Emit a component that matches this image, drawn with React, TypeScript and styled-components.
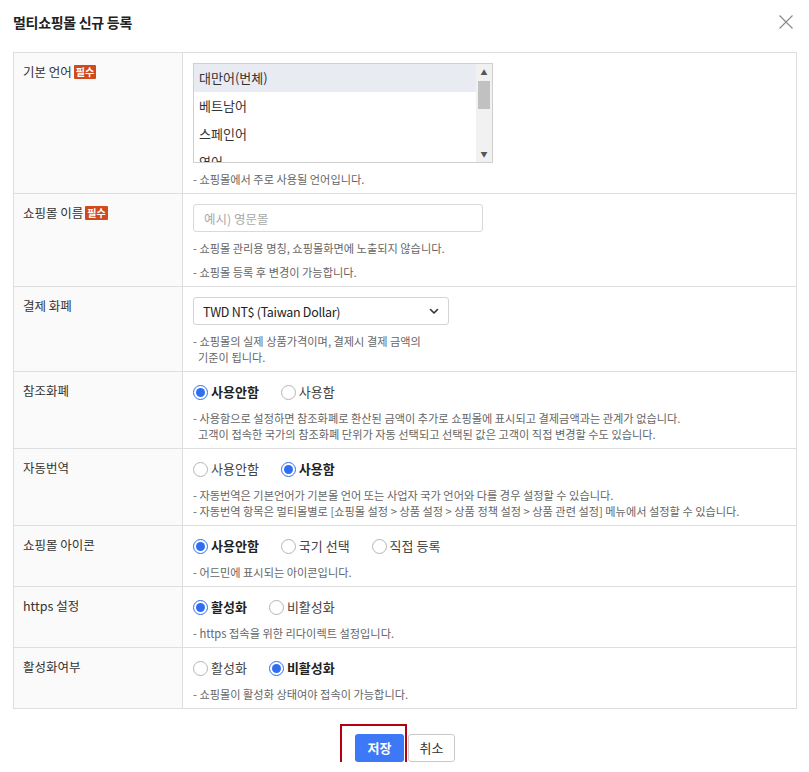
import React from 'react';
import styled, { createGlobalStyle } from 'styled-components';

const GlobalStyle = createGlobalStyle`
  * { box-sizing: border-box; }
  body {
    margin: 0;
    background: #fff;
    font-family: "Noto Sans CJK KR", "Noto Sans", sans-serif;
    color: #333;
  }
`;

interface RadioOption {
  label: string;
  checked: boolean;
}

interface FieldRow {
  label: string;
  required?: boolean;
  options?: RadioOption[];
  help: string[];
  helpSpaced?: boolean;
  kind: 'list' | 'input' | 'select' | 'radio';
}

const languages = ['대만어(번체)', '베트남어', '스페인어', '영어'];

const rows: FieldRow[] = [
  { label: '기본 언어', required: true, kind: 'list', help: ['- 쇼핑몰에서 주로 사용될 언어입니다.'] },
  {
    label: '쇼핑몰 이름',
    required: true,
    kind: 'input',
    helpSpaced: true,
    help: ['- 쇼핑몰 관리용 명칭, 쇼핑몰화면에 노출되지 않습니다.', '- 쇼핑몰 등록 후 변경이 가능합니다.'],
  },
  {
    label: '결제 화폐',
    kind: 'select',
    help: ['- 쇼핑몰의 실제 상품가격이며, 결제시 결제 금액의', '  기준이 됩니다.'],
  },
  {
    label: '참조화폐',
    kind: 'radio',
    options: [
      { label: '사용안함', checked: true },
      { label: '사용함', checked: false },
    ],
    help: [
      '- 사용함으로 설정하면 참조화폐로 환산된 금액이 추가로 쇼핑몰에 표시되고 결제금액과는 관계가 없습니다.',
      '  고객이 접속한 국가의 참조화폐 단위가 자동 선택되고 선택된 값은 고객이 직접 변경할 수도 있습니다.',
    ],
  },
  {
    label: '자동번역',
    kind: 'radio',
    options: [
      { label: '사용안함', checked: false },
      { label: '사용함', checked: true },
    ],
    help: [
      '- 자동번역은 기본언어가 기본몰 언어 또는 사업자 국가 언어와 다를 경우 설정할 수 있습니다.',
      '- 자동번역 항목은 멀티몰별로 [쇼핑몰 설정 > 상품 설정 > 상품 정책 설정 > 상품 관련 설정] 메뉴에서 설정할 수 있습니다.',
    ],
  },
  {
    label: '쇼핑몰 아이콘',
    kind: 'radio',
    options: [
      { label: '사용안함', checked: true },
      { label: '국기 선택', checked: false },
      { label: '직접 등록', checked: false },
    ],
    help: ['- 어드민에 표시되는 아이콘입니다.'],
  },
  {
    label: 'https 설정',
    kind: 'radio',
    options: [
      { label: '활성화', checked: true },
      { label: '비활성화', checked: false },
    ],
    help: ['- https 접속을 위한 리다이렉트 설정입니다.'],
  },
  {
    label: '활성화여부',
    kind: 'radio',
    options: [
      { label: '활성화', checked: false },
      { label: '비활성화', checked: true },
    ],
    help: ['- 쇼핑몰이 활성화 상태여야 접속이 가능합니다.'],
  },
];

const App: React.FC = () => {
  const renderControl = (row: FieldRow) => {
    switch (row.kind) {
      case 'list':
        return (
          <ListBox>
            <ListItems>
              {languages.map((lang, i) => (
                <ListItem key={lang} selected={i === 0}>{lang}</ListItem>
              ))}
            </ListItems>
            <ScrollTrack>
              <ScrollArrow>▲</ScrollArrow>
              <ScrollThumb />
              <ScrollArrow>▼</ScrollArrow>
            </ScrollTrack>
          </ListBox>
        );
      case 'input':
        return <TextInput placeholder="예시) 영문몰" />;
      case 'select':
        return (
          <SelectBox>
            <span>TWD NT$ (Taiwan Dollar)</span>
            <svg width="12" height="12" viewBox="0 0 12 12">
              <path d="M2.5 4.5 L6 8 L9.5 4.5" fill="none" stroke="#333" strokeWidth="1.6" strokeLinecap="round" strokeLinejoin="round" />
            </svg>
          </SelectBox>
        );
      default:
        return (
          <RadioGroup>
            {row.options!.map((opt) => (
              <RadioLabel key={opt.label} checked={opt.checked}>
                <RadioCircle checked={opt.checked} />
                {opt.label}
              </RadioLabel>
            ))}
          </RadioGroup>
        );
    }
  };

  return (
    <>
      <GlobalStyle />
      <Modal>
        <Header>
          <Title>멀티쇼핑몰 신규 등록</Title>
          <CloseButton aria-label="닫기">
            <svg width="16" height="16" viewBox="0 0 16 16">
              <path d="M1.5 1.5 L14.5 14.5 M14.5 1.5 L1.5 14.5" stroke="#888" strokeWidth="1.1" />
            </svg>
          </CloseButton>
        </Header>

        <FormTable>
          {rows.map((row) => (
            <Row key={row.label}>
              <LabelCell>
                {row.label}
                {row.required && <RequiredBadge>필수</RequiredBadge>}
              </LabelCell>
              <ContentCell>
                {renderControl(row)}
                <HelpBlock spaced={!!row.helpSpaced}>
                  {row.help.map((line) => (
                    <HelpText key={line}>{line}</HelpText>
                  ))}
                </HelpBlock>
              </ContentCell>
            </Row>
          ))}
        </FormTable>

        <Footer>
          <SaveWrap>
            <SaveButton>저장</SaveButton>
            <Highlight />
          </SaveWrap>
          <CancelButton>취소</CancelButton>
        </Footer>
      </Modal>
    </>
  );
};

const Modal = styled.div`
  width: 809px;
  padding: 0 12px 0 13px;
`;

const Header = styled.div`
  display: flex;
  justify-content: space-between;
  align-items: center;
  height: 52px;
  padding-bottom: 8px;
`;

const Title = styled.h2`
  margin: 0;
  font-size: 14px;
  line-height: 18px;
  font-weight: 700;
  color: #222;
  letter-spacing: -0.3px;
`;

const CloseButton = styled.button`
  background: none;
  border: none;
  padding: 0;
  margin-right: 3px;
  display: flex;
  cursor: pointer;
`;

const FormTable = styled.div`
  border: 1px solid #dedede;
  border-bottom: none;
`;

const Row = styled.div`
  display: grid;
  grid-template-columns: 169px 1fr;
  border-bottom: 1px solid #dedede;
`;

const LabelCell = styled.div`
  background: #fafafa;
  border-right: 1px solid #dedede;
  padding: 9px 9px;
  font-size: 12.5px;
  line-height: 20px;
  color: #333;
  display: flex;
  align-items: flex-start;
  gap: 2px;
`;

const RequiredBadge = styled.span`
  display: inline-block;
  background: #cf4a1c;
  color: #fff;
  font-size: 10px;
  font-weight: 700;
  line-height: 14px;
  height: 14px;
  padding: 0 2px;
  margin-top: 3px;
  border-radius: 1px;
`;

const ContentCell = styled.div`
  padding: 10px 10px 6px;
  display: flex;
  flex-direction: column;
  align-items: flex-start;
`;

const ListBox = styled.div`
  width: 300px;
  height: 100px;
  border: 1px solid #cfcfcf;
  display: flex;
  overflow: hidden;
`;

const ListItems = styled.div`
  flex: 1;
  display: flex;
  flex-direction: column;
`;

const ListItem = styled.div<{ selected: boolean }>`
  height: 28px;
  flex-shrink: 0;
  padding-left: 5px;
  font-size: 13px;
  line-height: 28px;
  color: #333;
  background: ${(p) => (p.selected ? '#e8ebf2' : '#fff')};
`;

const ScrollTrack = styled.div`
  width: 16px;
  background: #f1f1f1;
  display: flex;
  flex-direction: column;
  align-items: center;
  padding: 2px 0;
`;

const ScrollArrow = styled.div`
  font-size: 7px;
  line-height: 12px;
  height: 12px;
  color: #555;
`;

const ScrollThumb = styled.div`
  width: 12px;
  height: 28px;
  background: #c1c1c1;
  margin-bottom: auto;
  margin-top: 3px;
`;

const TextInput = styled.input`
  display: block;
  width: 290px;
  height: 28px;
  border: 1px solid #d9d9d9;
  border-radius: 3px;
  padding: 0 10px;
  font-family: inherit;
  font-size: 12.5px;
  color: #333;
  outline: none;

  &::placeholder {
    color: #aaa;
  }
`;

const SelectBox = styled.div`
  width: 256px;
  height: 28px;
  border: 1px solid #d4d4d4;
  border-radius: 3px;
  padding: 0 8px 0 9px;
  display: flex;
  align-items: center;
  justify-content: space-between;
  font-size: 12.5px;
  color: #222;
  letter-spacing: -0.3px;
`;

const RadioGroup = styled.div`
  display: flex;
  align-items: center;
  height: 20px;
  gap: 22px;
`;

const RadioLabel = styled.label<{ checked: boolean }>`
  display: flex;
  align-items: center;
  gap: 3px;
  height: 20px;
  font-size: 13px;
  line-height: 20px;
  font-weight: ${(p) => (p.checked ? 700 : 400)};
  color: ${(p) => (p.checked ? '#222' : '#444')};
`;

const RadioCircle = styled.span<{ checked: boolean }>`
  width: 15px;
  height: 15px;
  border-radius: 50%;
  border: 1px solid ${(p) => (p.checked ? '#2f6ef2' : '#b5b5b5')};
  background: #fff;
  display: flex;
  align-items: center;
  justify-content: center;

  &::after {
    content: '';
    width: 9px;
    height: 9px;
    border-radius: 50%;
    background: ${(p) => (p.checked ? '#2f6ef2' : 'transparent')};
  }
`;

const HelpBlock = styled.div<{ spaced: boolean }>`
  margin-top: 8px;
  display: flex;
  flex-direction: column;
  gap: ${(p) => (p.spaced ? '8px' : '0')};
`;

const HelpText = styled.p`
  margin: 0;
  height: 16px;
  font-size: 11.2px;
  line-height: 16px;
  color: #666;
  white-space: pre;
`;

const Footer = styled.div`
  display: flex;
  justify-content: center;
  gap: 4px;
  padding-top: 25px;
`;

const SaveWrap = styled.div`
  position: relative;
`;

const Highlight = styled.div`
  position: absolute;
  left: -15px;
  top: -10px;
  width: 67px;
  height: 43px;
  border: 2px solid #b5000f;
  pointer-events: none;
`;

const SaveButton = styled.button`
  display: block;
  width: 49px;
  height: 28px;
  border: none;
  border-radius: 3px;
  background: #3d78f6;
  color: #fff;
  font-family: inherit;
  font-size: 13px;
  line-height: 28px;
  padding: 0;
  font-weight: 700;
  cursor: pointer;
`;

const CancelButton = styled.button`
  display: block;
  width: 47px;
  height: 28px;
  border: 1px solid #c8c8c8;
  border-radius: 3px;
  background: #fff;
  color: #333;
  font-family: inherit;
  font-size: 13px;
  line-height: 26px;
  padding: 0;
  cursor: pointer;
`;

export default App;
